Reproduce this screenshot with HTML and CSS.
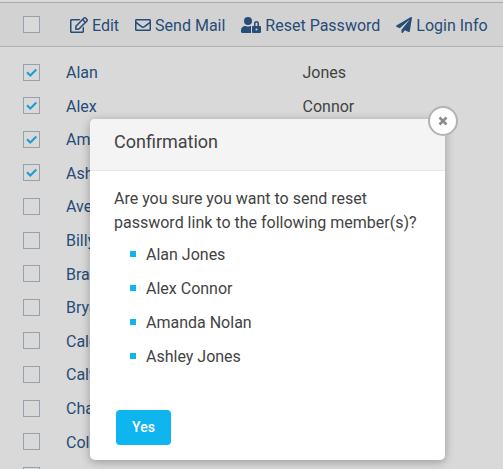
FILE: index.html
```html
<!DOCTYPE html>
<html lang="en">
<head>
<meta charset="utf-8">
<title>Members</title>
<link rel="stylesheet" href="styles.css">
</head>
<body>
<main class="members">
  <header class="toolbar">
    <span class="check"></span>
    <nav class="actions">
      <a class="action edit"><svg width="18" height="16" viewBox="0 0 576 512"><path d="M402.300 344.900l32-32c5-5 13.700-1.500 13.700 5.700V464c0 26.500-21.500 48-48 48H48c-26.500 0-48-21.500-48-48V112c0-26.500 21.500-48 48-48h273.500c7.100 0 10.700 8.600 5.700 13.700l-32 32c-1.500 1.500-3.500 2.300-5.700 2.300H48v352h352V350.500c0-2.100.8-4.100 2.300-5.600zm156.600-201.800L296.300 405.700l-90.400 10c-26.200 2.900-48.500-19.200-45.600-45.600l10-90.400L432.900 17.100c22.900-22.900 59.900-22.900 82.700 0l43.200 43.200c22.900 22.900 22.900 60 .1 82.800zM460.100 174L402 115.900 216.200 301.800l-7.300 65.300 65.300-7.300L460.100 174zm64.800-79.700l-43.200-43.200c-4.100-4.100-10.800-4.100-14.800 0L436 82l58.100 58.100 30.900-30.900c4-4.200 4-10.800-.1-14.900z"/></svg><span>Edit</span></a>
      <a class="action mail"><svg width="16" height="16" viewBox="0 0 512 512"><path d="M464 64H48C21.500 64 0 85.500 0 112v288c0 26.500 21.500 48 48 48h416c26.500 0 48-21.500 48-48V112c0-26.500-21.500-48-48-48zm0 48v40.800c-22.400 18.300-58.200 46.700-134.600 106.500-16.800 13.200-50.200 45.100-73.400 44.700-23.200.4-56.600-31.500-73.400-44.700C106.200 199.500 70.400 171.100 48 152.800V112h416zM48 400V214.400c22.900 18.300 55.400 43.900 104.900 82.600 21.900 17.200 60.100 55.200 103.100 55 42.700.2 80.500-37.200 103.100-54.900 49.500-38.800 82-64.400 104.900-82.700V400H48z"/></svg><span>Send Mail</span></a>
      <a class="action reset"><svg width="20" height="16" viewBox="0 0 640 512"><path d="M224 256A128 128 0 1 0 96 128a128 128 0 0 0 128 128zm96 64a63.100 63.100 0 0 1 8.100-30.500c-4.800-.5-9.500-1.500-14.500-1.500h-16.700a174.100 174.100 0 0 1-145.800 0h-16.700A134.400 134.400 0 0 0 0 422.400V464a48 48 0 0 0 48 48h280.900a63.500 63.500 0 0 1-8.900-32zm288-32h-32v-80a80 80 0 0 0-160 0v80h-32a32 32 0 0 0-32 32v160a32 32 0 0 0 32 32h224a32 32 0 0 0 32-32V320a32 32 0 0 0-32-32zM496 432a32 32 0 1 1 32-32 32 32 0 0 1-32 32zm32-144h-64v-80a32 32 0 0 1 64 0z"/></svg><span>Reset Password</span></a>
      <a class="action login"><svg width="16" height="16" viewBox="0 0 512 512"><path d="M476 3.200L12.500 270.600c-18.100 10.400-15.800 35.600 2.200 43.200L121 358.400l287.300-253.200c5.500-4.900 13.300 2.600 8.600 8.300L176 407v80.500c0 23.600 28.500 32.900 42.500 15.800L282 426l124.600 52.200c14.200 6 30.400-2.900 33-18.200l72-432C515 7.800 493.300-6.800 476 3.200z"/></svg><span>Login Info</span></a>
    </nav>
  </header>
  <section class="rows">
    <div class="row"><span class="check"><svg viewBox="0 0 15 15"><path d="M3 7.300L6.300 10.500L12.300 4.500"/></svg></span><a>Alan</a><span>Jones</span></div>
    <div class="row"><span class="check"><svg viewBox="0 0 15 15"><path d="M3 7.300L6.300 10.500L12.300 4.500"/></svg></span><a>Alex</a><span>Connor</span></div>
    <div class="row"><span class="check"><svg viewBox="0 0 15 15"><path d="M3 7.300L6.300 10.500L12.300 4.500"/></svg></span><a>Amanda</a></div>
    <div class="row"><span class="check"><svg viewBox="0 0 15 15"><path d="M3 7.300L6.300 10.500L12.300 4.500"/></svg></span><a>Ashley</a></div>
    <div class="row"><span class="check"></span><a>Avery</a></div>
    <div class="row"><span class="check"></span><a>Billy</a></div>
    <div class="row"><span class="check"></span><a>Brad</a></div>
    <div class="row"><span class="check"></span><a>Bryan</a></div>
    <div class="row"><span class="check"></span><a>Caleb</a></div>
    <div class="row"><span class="check"></span><a>Calvin</a></div>
    <div class="row"><span class="check"></span><a>Chad</a></div>
    <div class="row"><span class="check"></span><a>Colin</a></div>
    <div class="row"><span class="check"></span></div>
  </section>
</main>
<div class="modal" role="dialog">
  <h1>Confirmation</h1>
  <button class="close" aria-label="Close"><svg width="10" height="10" viewBox="0 0 10 10"><path d="M1.500 1.500L8.500 8.500M8.500 1.500L1.500 8.500"/></svg></button>
  <div class="content">
    <p>Are you sure you want to send reset password link to the following member(s)?</p>
    <ul>
      <li>Alan Jones</li>
      <li>Alex Connor</li>
      <li>Amanda Nolan</li>
      <li>Ashley Jones</li>
    </ul>
    <button class="yes">Yes</button>
  </div>
</div>
</body>
</html>
```
FILE: styles.css
```css
* { box-sizing: border-box; }
body {
  margin: 0;
  height: 469px;
  overflow: hidden;
  background: #d9d9d9;
  color: #434343;
  font: 16px/24px Roboto, sans-serif;
}
.members { height: 469px; overflow: hidden; padding-top: 2px; }
.toolbar {
  display: flex;
  align-items: center;
  height: 45px;
  padding-left: 23px;
  border-top: 1px solid #a9a9a9;
  border-bottom: 1px solid #b0b0b0;
  background: #d2d2d2;
}
.check {
  flex: none;
  width: 17px;
  height: 17px;
  border: 1px solid #94a1ae;
}
.toolbar .check { background: #d9d9d9; }
.check svg { display: block; width: 15px; height: 15px; }
.check path { fill: none; stroke: #189fce; stroke-width: 2; }
.actions { display: flex; margin-left: 30px; white-space: nowrap; }
.action { display: flex; align-items: center; gap: 4px; color: #274c77; }
.action svg { fill: currentColor; }
.action span { padding-top: 2px; margin-bottom: -1px; }
.mail, .reset, .login { margin-left: 16px; }
.rows { padding-top: 8.3px; }
.row {
  display: grid;
  grid-template-columns: 43px 236.5px 1fr;
  align-items: center;
  height: 33.6px;
  padding-left: 23px;
}
.row a, .row > span:last-child:not(.check) { padding-top: 2px; }
.row a { color: #274c77; }
.modal {
  position: absolute;
  left: 90px;
  top: 119px;
  width: 355px;
  height: 341px;
  border-radius: 5px;
  background: #fff;
  box-shadow: 0 2px 10px rgba(0, 0, 0, .3);
}
h1 {
  height: 52px;
  margin: 0;
  padding-left: 24px;
  border-bottom: 1px solid #e3e8ee;
  border-radius: 5px 5px 0 0;
  background: #f4f4f4;
  font-size: 18px;
  font-weight: 400;
  line-height: 46px;
}
.close {
  position: absolute;
  top: -13px;
  right: -13px;
  display: grid;
  place-items: center;
  width: 30px;
  height: 30px;
  padding: 0;
  border: 2px solid #b3b3b3;
  border-radius: 50%;
  background: #fff;
}
.close path { stroke: #8c8c8c; stroke-width: 2.6; }
.content { padding: 16px 24px; }
p { margin: 0; }
ul { margin: 3px 0 0; padding: 0; list-style: none; }
li {
  display: flex;
  align-items: center;
  gap: 10px;
  height: 34px;
  padding-left: 16px;
}
li::before { content: ""; width: 6px; height: 6px; margin-bottom: 2px; background: #0fb5ee; }
.yes {
  display: block;
  width: 55px;
  height: 35px;
  margin: 36px 0 0 2px;
  padding: 0;
  border: 0;
  border-radius: 4px;
  background: #0fb5ee;
  color: #fff;
  font: 500 14px/35px Roboto, sans-serif;
}
```
